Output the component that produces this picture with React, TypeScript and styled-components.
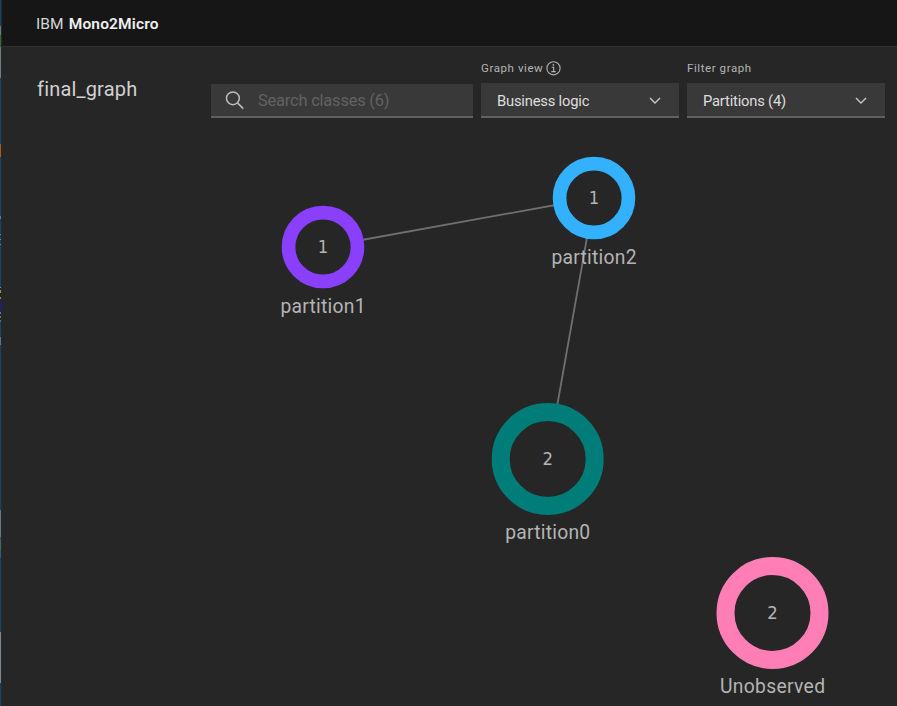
import React from "react";
import styled, { createGlobalStyle } from "styled-components";

const GlobalStyle = createGlobalStyle`
  *, *::before, *::after { box-sizing: border-box; }
  html, body { margin: 0; padding: 0; background: #262626; overflow: hidden; }
  body { font-family: Roboto, "Liberation Sans", sans-serif; color: #c6c6c6; }
`;

const Window = styled.div`
  display: flex;
  width: 897px;
  height: 706px;
  background: #262626;
`;

const DesktopEdge = styled.div`
  flex: none;
  width: 1px;
  background: linear-gradient(
    to bottom,
    #174264 0 26px, #74777a 26px 35px, #356b20 35px 47px, #777b7d 47px 78px,
    #174264 78px 144px, #a65a1c 144px 157px, #174264 157px 216px,
    #68788a 216px 219px, #174264 219px 234px, #7b8791 234px 235px,
    #174264 235px 239px, #7b8791 239px 240px, #174264 240px 244px,
    #7b8791 244px 245px, #174264 245px 287px, #8c8d89 287px 288px,
    #17222d 288px 290px, #9a9b13 290px 293px, #17222d 293px 297px,
    #9a9b13 297px 299px, #17222d 299px 301px, #1e1796 301px 312px,
    #777 312px 314px, #222 314px 316px, #777 316px 318px, #222 318px 320px,
    #666 320px 322px, #174264 322px 337px, #666f78 337px 345px,
    #174264 345px 510px, #747474 510px 537px, #35577e 537px 540px,
    #426b54 540px 550px, #3a5580 550px 558px, #174264 558px 632px,
    #858585 632px 683px, #174264 683px
  );
`;

const AppFrame = styled.main`
  display: flex;
  flex: 1;
  min-width: 0;
  flex-direction: column;
  border-left: 1px solid #222b32;
`;

const Header = styled.header`
  display: flex;
  align-items: center;
  gap: 5px;
  flex: none;
  height: 47px;
  padding: 1px 34px 0;
  border-bottom: 1px solid #313131;
  background: #161616;
  font-size: 15.5px;
`;

const Vendor = styled.span`
  color: #d8d8d8;
  letter-spacing: 0.1px;
`;

const Product = styled.span`
  color: #f0f0f0;
  font-weight: 600;
  letter-spacing: 0.15px;
`;

const Toolbar = styled.section`
  display: flex;
  align-items: flex-end;
  gap: 8px;
  flex: none;
  height: 71px;
  padding: 0 12px 0 35px;
`;

const Title = styled.h1`
  flex: 1;
  align-self: flex-start;
  margin: 30px 0 0;
  font-size: 20px;
  line-height: 24px;
  font-weight: 400;
  letter-spacing: 0.18px;
  color: #d2d2d2;
`;

const SearchBox = styled.div`
  display: flex;
  align-items: center;
  gap: 14px;
  width: 262px;
  height: 34px;
  padding: 0 14px;
  border-bottom: 2px solid #606060;
  background: #393939;
  color: #626262;
  font-size: 16.5px;
  letter-spacing: -0.23px;
`;

const Field = styled.div`
  display: flex;
  flex-direction: column;
  width: 198px;
`;

const FieldLabel = styled.div`
  display: flex;
  align-items: center;
  gap: 3px;
  height: 16px;
  margin-bottom: 7px;
  font-size: 11.5px;
  letter-spacing: 0.58px;
  color: #b5b5b5;
`;

const Select = styled.button`
  display: flex;
  align-items: center;
  justify-content: space-between;
  height: 35px;
  padding: 2px 18px 0 16px;
  border: 0;
  border-bottom: 2px solid #606060;
  border-radius: 0;
  background: #393939;
  color: #dedede;
  font-family: inherit;
  font-size: 14.75px;
  letter-spacing: -0.2px;
`;

const Graph = styled.svg`
  display: block;
  flex: 1;
  min-height: 0;
  width: 895px;
`;

const Edge = styled.line`
  stroke: #6f6f6f;
  stroke-width: 1.8;
`;

const NodeLabel = styled.text`
  fill: #b4b4b4;
  font-size: 19.3px;
  text-anchor: middle;
`;

const NodeCount = styled.text`
  fill: #b4b4b4;
  font-family: "DejaVu Sans", sans-serif;
  font-size: 18px;
  text-anchor: middle;
`;

const SearchIcon = () => (
  <svg width="19" height="19" viewBox="0 0 19 19" fill="none" stroke="#bdbdbd" strokeWidth="1.5">
    <circle cx="7.9" cy="7.3" r="6.4" />
    <path d="M12.5 11.9 18.2 17.6" />
  </svg>
);

const InfoIcon = () => (
  <svg width="15" height="15" viewBox="0 0 15 15" fill="none" stroke="#b5b5b5" strokeWidth="1.1">
    <circle cx="7.5" cy="7.3" r="6.6" />
    <path d="M5.7 6.3h2v4.1M5.3 10.6h4.4" />
    <circle cx="7.4" cy="3.8" r=".85" fill="#b5b5b5" stroke="none" />
  </svg>
);

const Chevron = () => (
  <svg width="12" height="8" viewBox="0 0 12 8" fill="none" stroke="#c8c8c8" strokeWidth="1.4">
    <path d="m1 1 5 5 5-5" />
  </svg>
);

interface Partition {
  name: string;
  count: number;
  x: number;
  y: number;
  radius: number;
  color: string;
  labelWidth: number;
}

const partitions: Partition[] = [
  { name: "partition1", count: 1, x: 323, y: 247, radius: 41.3, color: "#8a3ffc", labelWidth: 85 },
  { name: "partition2", count: 1, x: 594, y: 198, radius: 41.3, color: "#33b1ff", labelWidth: 85 },
  { name: "partition0", count: 2, x: 547.7, y: 459, radius: 56, color: "#007d79", labelWidth: 85 },
  { name: "Unobserved", count: 2, x: 772.5, y: 613, radius: 56, color: "#ff7eb6", labelWidth: 105 },
];

const PartitionNode = ({ name, count, x, y, radius, color, labelWidth }: Partition) => {
  const ring = radius > 50 ? 18 : 13.7;
  return (
    <g>
      <circle cx={x} cy={y} r={radius - ring / 2} fill="#262626" stroke={color} strokeWidth={ring} />
      <NodeCount x={x} y={y + 5.8} textLength={10.5} lengthAdjust="spacingAndGlyphs">{count}</NodeCount>
      <NodeLabel x={x} y={y + radius + 24.3} textLength={labelWidth}>{name}</NodeLabel>
    </g>
  );
};

export default function App() {
  return (
    <>
      <GlobalStyle />
      <Window>
        <DesktopEdge />
        <AppFrame>
          <Header>
            <Vendor>IBM</Vendor>
            <Product>Mono2Micro</Product>
          </Header>
          <Toolbar>
            <Title>final_graph</Title>
            <SearchBox>
              <SearchIcon />
              <span>Search classes (6)</span>
            </SearchBox>
            <Field>
              <FieldLabel>Graph view <InfoIcon /></FieldLabel>
              <Select>Business logic <Chevron /></Select>
            </Field>
            <Field>
              <FieldLabel>Filter graph</FieldLabel>
              <Select>Partitions (4) <Chevron /></Select>
            </Field>
          </Toolbar>
          <Graph viewBox="2 118 895 588">
            <Edge x1="323" y1="247" x2="594" y2="198" />
            <Edge x1="594" y1="198" x2="547.7" y2="459" />
            {partitions.map((partition) => (
              <PartitionNode key={partition.name} {...partition} />
            ))}
          </Graph>
        </AppFrame>
      </Window>
    </>
  );
}
